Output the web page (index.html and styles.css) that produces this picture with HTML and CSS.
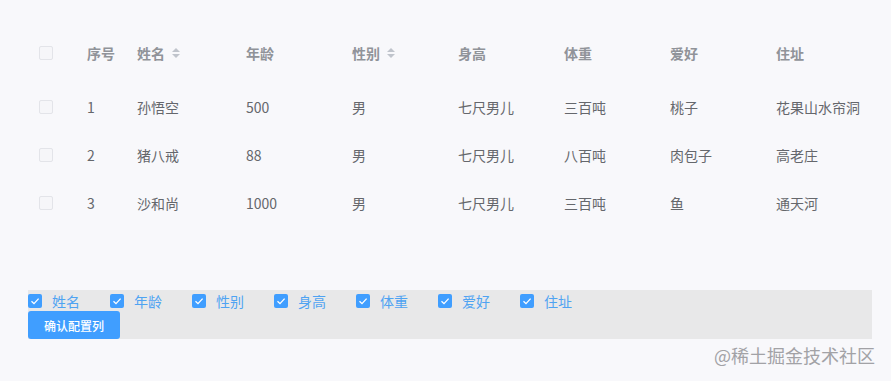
FILE: index.html
```html
<!DOCTYPE html>
<html lang="zh">
<head>
<meta charset="utf-8">
<link rel="stylesheet" href="styles.css">
</head>
<body>
<div class="page">
  <table class="grid">
    <colgroup>
      <col class="c-sel"><col class="c-idx"><col class="c-name"><col class="c-w"><col class="c-w"><col class="c-w"><col class="c-w"><col class="c-w"><col class="c-w">
    </colgroup>
    <thead>
      <tr>
        <th><span class="box"></span></th>
        <th>序号</th>
        <th><span class="sortable">姓名<span class="caret"><i class="up"></i><i class="down"></i></span></span></th>
        <th>年龄</th>
        <th><span class="sortable">性别<span class="caret"><i class="up"></i><i class="down"></i></span></span></th>
        <th>身高</th>
        <th>体重</th>
        <th>爱好</th>
        <th>住址</th>
      </tr>
    </thead>
    <tbody>
      <tr><td><span class="box"></span></td><td>1</td><td>孙悟空</td><td>500</td><td>男</td><td>七尺男儿</td><td>三百吨</td><td>桃子</td><td>花果山水帘洞</td></tr>
      <tr><td><span class="box"></span></td><td>2</td><td>猪八戒</td><td>88</td><td>男</td><td>七尺男儿</td><td>八百吨</td><td>肉包子</td><td>高老庄</td></tr>
      <tr><td><span class="box"></span></td><td>3</td><td>沙和尚</td><td>1000</td><td>男</td><td>七尺男儿</td><td>三百吨</td><td>鱼</td><td>通天河</td></tr>
    </tbody>
  </table>

  <div class="config">
    <div class="checks">
      <label class="chk"><span class="cbox"><svg viewBox="0 0 14 14"><path d="M3.5 7.2 L6 9.6 L10.6 4.6" fill="none" stroke="#fff" stroke-width="1.3"/></svg></span><span class="lbl">姓名</span></label>
      <label class="chk"><span class="cbox"><svg viewBox="0 0 14 14"><path d="M3.5 7.2 L6 9.6 L10.6 4.6" fill="none" stroke="#fff" stroke-width="1.3"/></svg></span><span class="lbl">年龄</span></label>
      <label class="chk"><span class="cbox"><svg viewBox="0 0 14 14"><path d="M3.5 7.2 L6 9.6 L10.6 4.6" fill="none" stroke="#fff" stroke-width="1.3"/></svg></span><span class="lbl">性别</span></label>
      <label class="chk"><span class="cbox"><svg viewBox="0 0 14 14"><path d="M3.5 7.2 L6 9.6 L10.6 4.6" fill="none" stroke="#fff" stroke-width="1.3"/></svg></span><span class="lbl">身高</span></label>
      <label class="chk"><span class="cbox"><svg viewBox="0 0 14 14"><path d="M3.5 7.2 L6 9.6 L10.6 4.6" fill="none" stroke="#fff" stroke-width="1.3"/></svg></span><span class="lbl">体重</span></label>
      <label class="chk"><span class="cbox"><svg viewBox="0 0 14 14"><path d="M3.5 7.2 L6 9.6 L10.6 4.6" fill="none" stroke="#fff" stroke-width="1.3"/></svg></span><span class="lbl">爱好</span></label>
      <label class="chk"><span class="cbox"><svg viewBox="0 0 14 14"><path d="M3.5 7.2 L6 9.6 L10.6 4.6" fill="none" stroke="#fff" stroke-width="1.3"/></svg></span><span class="lbl">住址</span></label>
    </div>
    <button class="btn">确认配置列</button>
  </div>

  <div class="watermark">@稀土掘金技术社区</div>
</div>
</body>
</html>
```
FILE: styles.css
```css
html, body {
  margin: 0;
  padding: 0;
}
body {
  background: #f8f8fb;
  font-family: "Noto Sans CJK SC", "Noto Sans", sans-serif;
  width: 891px;
  height: 381px;
  overflow: hidden;
}
.page {
  position: relative;
  height: 381px;
  padding: 23px 19px 0 28px;
  box-sizing: border-box;
}
.grid {
  border-collapse: collapse;
  table-layout: fixed;
  width: 844px;
  font-size: 14px;
}
.c-sel { width: 49px; }
.c-idx { width: 50px; }
.c-name { width: 109px; }
.c-w { width: 106px; }
.grid th, .grid td {
  padding: 0 0 0 10px;
  text-align: left;
  white-space: nowrap;
}
.grid th {
  height: 60px;
  color: #909399;
  font-weight: 600;
}
.grid td {
  height: 48px;
  color: #65676c;
}
.box {
  display: block;
  width: 12px;
  height: 12px;
  border: 1px solid #e3e4e9;
  background: #f6f6f9;
  border-radius: 2px;
  margin-left: 1px;
}
.sortable {
  display: inline-flex;
  align-items: center;
}
.caret {
  display: inline-flex;
  flex-direction: column;
  gap: 2px;
  margin-left: 7px;
}
.caret i {
  display: block;
  width: 0;
  height: 0;
  border-left: 4px solid transparent;
  border-right: 4px solid transparent;
}
.caret .up { border-bottom: 4px solid #c0c4cc; }
.caret .down { border-top: 4px solid #c0c4cc; }

.config {
  margin-top: 63px;
  width: 844px;
  background: #e8e8e9;
  height: 49px;
}
.checks {
  display: flex;
  height: 21px;
  align-items: center;
}
.chk {
  display: inline-flex;
  align-items: center;
  margin-right: 30px;
  font-size: 14px;
  color: #4fa3f2;
}
.cbox {
  width: 14px;
  height: 14px;
  background: #409eff;
  border-radius: 2px;
  display: block;
}
.cbox svg {
  display: block;
  width: 14px;
  height: 14px;
}
.lbl {
  padding-left: 10px;
  line-height: 14px;
}
.btn {
  display: block;
  height: 28px;
  width: 92px;
  padding: 0;
  border: none;
  border-radius: 3px;
  background: #409eff;
  color: #fff;
  font-family: "Noto Sans CJK SC", sans-serif;
  font-size: 12px;
  font-weight: 500;
}
.watermark {
  position: absolute;
  right: 16px;
  top: 343px;
  font-size: 18px;
  color: #a2a2a6;
  line-height: 24px;
}
```
